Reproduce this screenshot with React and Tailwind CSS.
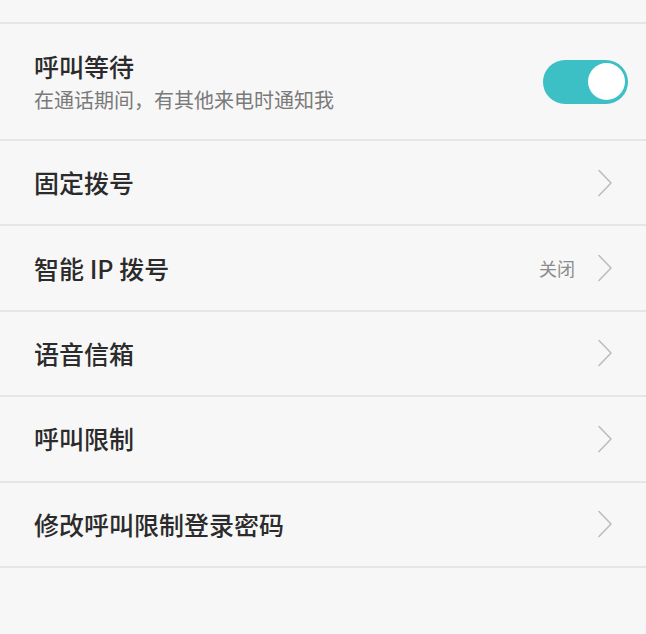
import React from "react";

const font = { fontFamily: '"Noto Sans CJK SC", "Noto Sans", sans-serif' };

function Chevron() {
  return (
    <svg width="16" height="28" viewBox="0 0 16 28" fill="none" className="shrink-0">
      <path d="M2 1.5 L14 14 L2 26.5" stroke="#bdbdbd" strokeWidth="1.6" strokeLinecap="round" strokeLinejoin="round" />
    </svg>
  );
}

function Row({ title, value }) {
  return (
    <div className="flex h-[85.4px] items-center justify-between border-b-2 border-[#e6e6e6] pl-[34px] pr-[33px]">
      <span className="text-[25px] font-medium leading-none text-[#2b2b2b]">{title}</span>
      <div className="flex items-center gap-[22px]">
        {value && <span className="text-[18px] leading-none text-[#8c8c8c]">{value}</span>}
        <Chevron />
      </div>
    </div>
  );
}

export default function App() {
  return (
    <div className="h-[634px] w-[646px] overflow-hidden bg-[#f7f7f7]" style={font}>
      <div className="h-[24px] border-b-2 border-[#e6e6e6]" />
      <div className="flex h-[117px] items-center justify-between border-b-2 border-[#e6e6e6] pl-[34px] pr-[18px]">
        <div className="flex flex-col">
          <span className="text-[25px] font-medium leading-none text-[#2b2b2b]">呼叫等待</span>
          <span className="mt-[11px] text-[20px] leading-none text-[#7a7a7a]">在通话期间，有其他来电时通知我</span>
        </div>
        <div className="flex h-[44px] w-[85px] items-center justify-end rounded-full bg-[#3cbfc5] pr-[3px]">
          <div className="h-[37px] w-[37px] rounded-full bg-white" />
        </div>
      </div>
      <Row title="固定拨号" />
      <Row title="智能 IP 拨号" value="关闭" />
      <Row title="语音信箱" />
      <Row title="呼叫限制" />
      <Row title="修改呼叫限制登录密码" />
    </div>
  );
}
